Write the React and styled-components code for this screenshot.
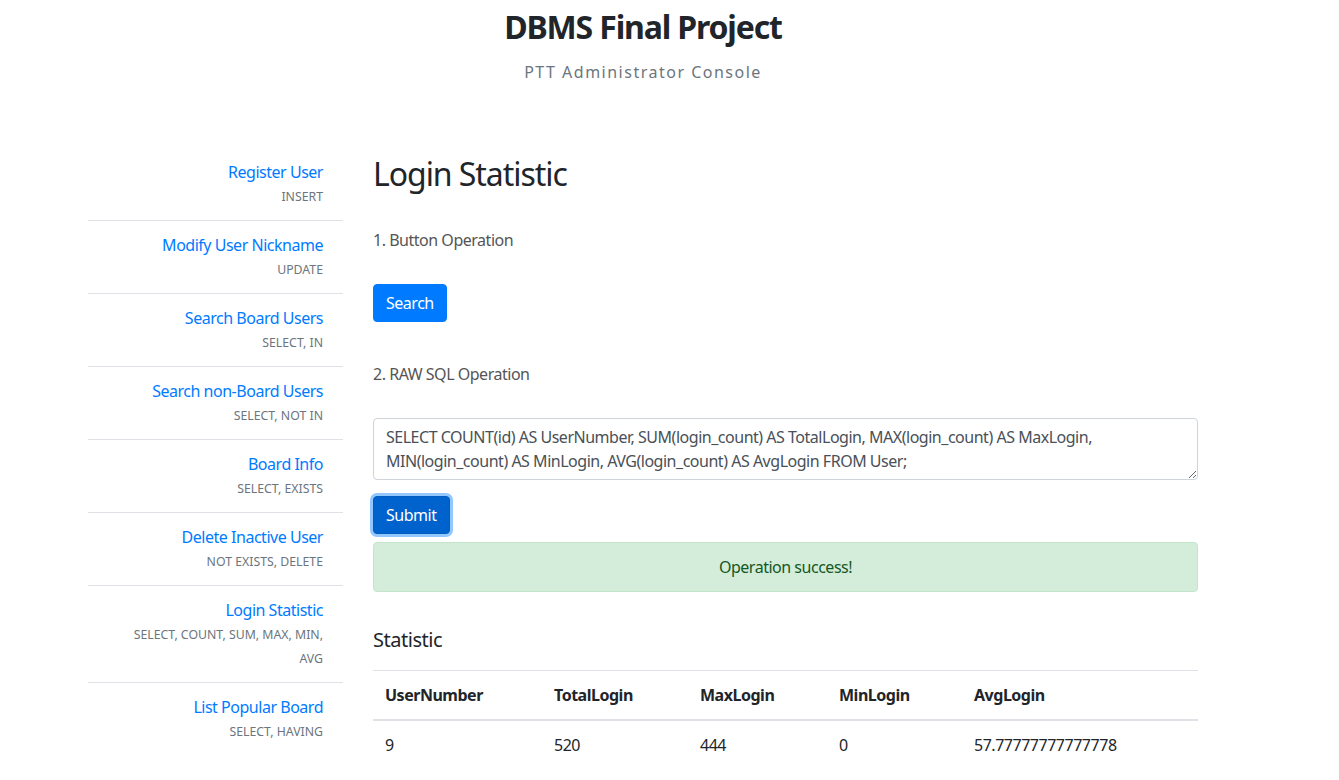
import React from "react";
import styled, { createGlobalStyle } from "styled-components";

const Global = createGlobalStyle`
  * { box-sizing: border-box; }
  html, body { margin: 0; padding: 0; background: #fff; }
  body {
    font-family: "Noto Sans", "Open Sans", sans-serif;
    font-size: 16px;
    line-height: 1.5;
    letter-spacing: -0.03em;
    color: #212529;
  }
`;

const Page = styled.div`
  width: 1110px;
  margin-left: 88px;
  padding-top: 8px;
`;

const Header = styled.header`
  text-align: center;
`;

const Title = styled.h1`
  margin: 0;
  font-size: 32px;
  font-weight: 700;
  line-height: 38px;
  letter-spacing: -0.036em;
  color: #212529;
`;

const Subtitle = styled.p`
  margin: 14px 0 0;
  font-size: 16px;
  line-height: 24px;
  letter-spacing: 1.5px;
  color: #6c757d;
`;

const Row = styled.div`
  display: grid;
  grid-template-columns: 255px 825px;
  column-gap: 30px;
  margin-top: 64px;
  align-items: start;
`;

const Sidebar = styled.nav`
  display: flex;
  flex-direction: column;
`;

const NavItem = styled.div`
  padding: 12px 20px 12px 0;
  text-align: right;
  border-bottom: ${(p) => (p.$last ? "none" : "1px solid #dee2e6")};
`;

const NavLink = styled.a`
  display: block;
  font-size: 16px;
  line-height: 24px;
  color: #007bff;
  text-decoration: none;
`;

const NavSub = styled.div`
  font-size: 12.3px;
  line-height: 24px;
  letter-spacing: 0;
  color: #6c757d;
  padding-left: 40px;
  padding-top: 1px;
  margin-bottom: -1px;
`;

const Main = styled.main`
  display: flex;
  flex-direction: column;
  align-items: flex-start;
`;

const PageTitle = styled.h2`
  margin: 7px 0 0;
  font-size: 32px;
  font-weight: 400;
  line-height: 38px;
  letter-spacing: -0.033em;
  color: #212529;
`;

const Label = styled.p`
  margin: ${(p) => p.$mt}px 0 0;
  font-size: 16px;
  line-height: 24px;
  color: #555;
`;

const Button = styled.button`
  margin-top: ${(p) => p.$mt}px;
  font-family: inherit;
  font-size: 16px;
  line-height: 24px;
  letter-spacing: inherit;
  padding: 6px 12px;
  border-radius: 4px;
  border: 1px solid ${(p) => (p.$focused ? "#005cbf" : "#007bff")};
  background: ${(p) => (p.$focused ? "#0062cc" : "#007bff")};
  color: #fff;
  box-shadow: ${(p) => (p.$focused ? "0 0 0 3px rgba(38,143,255,0.5)" : "none")};
  cursor: pointer;
`;

const TextArea = styled.textarea`
  margin-top: 32px;
  width: 100%;
  height: 62px;
  font-family: inherit;
  font-size: 16px;
  line-height: 24px;
  letter-spacing: inherit;
  padding: 6px 12px;
  color: #495057;
  border: 1px solid #ced4da;
  border-radius: 4px;
  resize: vertical;
  overflow: hidden;
`;

const Alert = styled.div`
  margin-top: 8px;
  width: 100%;
  padding: 12px 20px;
  line-height: 24px;
  text-align: center;
  background: #d4edda;
  border: 1px solid #c3e6cb;
  border-radius: 4px;
  color: #155724;
`;

const SectionTitle = styled.h4`
  margin: 36px 0 0;
  font-size: 20px;
  font-weight: 400;
  line-height: 24px;
  color: #212529;
`;

const Table = styled.table`
  margin-top: 18px;
  width: 100%;
  border-collapse: collapse;
  table-layout: fixed;
`;

const Th = styled.th`
  text-align: left;
  padding: 12px;
  line-height: 24px;
  font-weight: 700;
  border-top: 1px solid #dee2e6;
  border-bottom: 2px solid #dee2e6;
  width: ${(p) => p.$w}px;
`;

const Td = styled.td`
  padding: 12px;
  line-height: 24px;
`;

const navItems = [
  ["Register User", "INSERT"],
  ["Modify User Nickname", "UPDATE"],
  ["Search Board Users", "SELECT, IN"],
  ["Search non-Board Users", "SELECT, NOT IN"],
  ["Board Info", "SELECT, EXISTS"],
  ["Delete Inactive User", "NOT EXISTS, DELETE"],
  ["Login Statistic", "SELECT, COUNT, SUM, MAX, MIN, AVG"],
  ["List Popular Board", "SELECT, HAVING"],
];

const columns = [
  ["UserNumber", 169],
  ["TotalLogin", 146],
  ["MaxLogin", 139],
  ["MinLogin", 135],
  ["AvgLogin", 236],
];

const values = ["9", "520", "444", "0", "57.77777777777778"];

export default function App() {
  return (
    <>
      <Global />
      <Page>
        <Header>
          <Title>DBMS Final Project</Title>
          <Subtitle>PTT Administrator Console</Subtitle>
        </Header>
        <Row>
          <Sidebar>
            {navItems.map(([name, sub], i) => (
              <NavItem key={name} $last={i === navItems.length - 1}>
                <NavLink href="#">{name}</NavLink>
                <NavSub>{sub}</NavSub>
              </NavItem>
            ))}
          </Sidebar>
          <Main>
            <PageTitle>Login Statistic</PageTitle>
            <Label $mt={35}>1. Button Operation</Label>
            <Button $mt={32}>Search</Button>
            <Label $mt={40}>2. RAW SQL Operation</Label>
            <TextArea
              readOnly
              defaultValue="SELECT COUNT(id) AS UserNumber, SUM(login_count) AS TotalLogin, MAX(login_count) AS MaxLogin, MIN(login_count) AS MinLogin, AVG(login_count) AS AvgLogin FROM User;"
            />
            <Button $mt={16} $focused>
              Submit
            </Button>
            <Alert>Operation success!</Alert>
            <SectionTitle>Statistic</SectionTitle>
            <Table>
              <thead>
                <tr>
                  {columns.map(([c, w]) => (
                    <Th key={c} $w={w}>
                      {c}
                    </Th>
                  ))}
                </tr>
              </thead>
              <tbody>
                <tr>
                  {values.map((v, i) => (
                    <Td key={i}>{v}</Td>
                  ))}
                </tr>
              </tbody>
            </Table>
          </Main>
        </Row>
      </Page>
    </>
  );
}
